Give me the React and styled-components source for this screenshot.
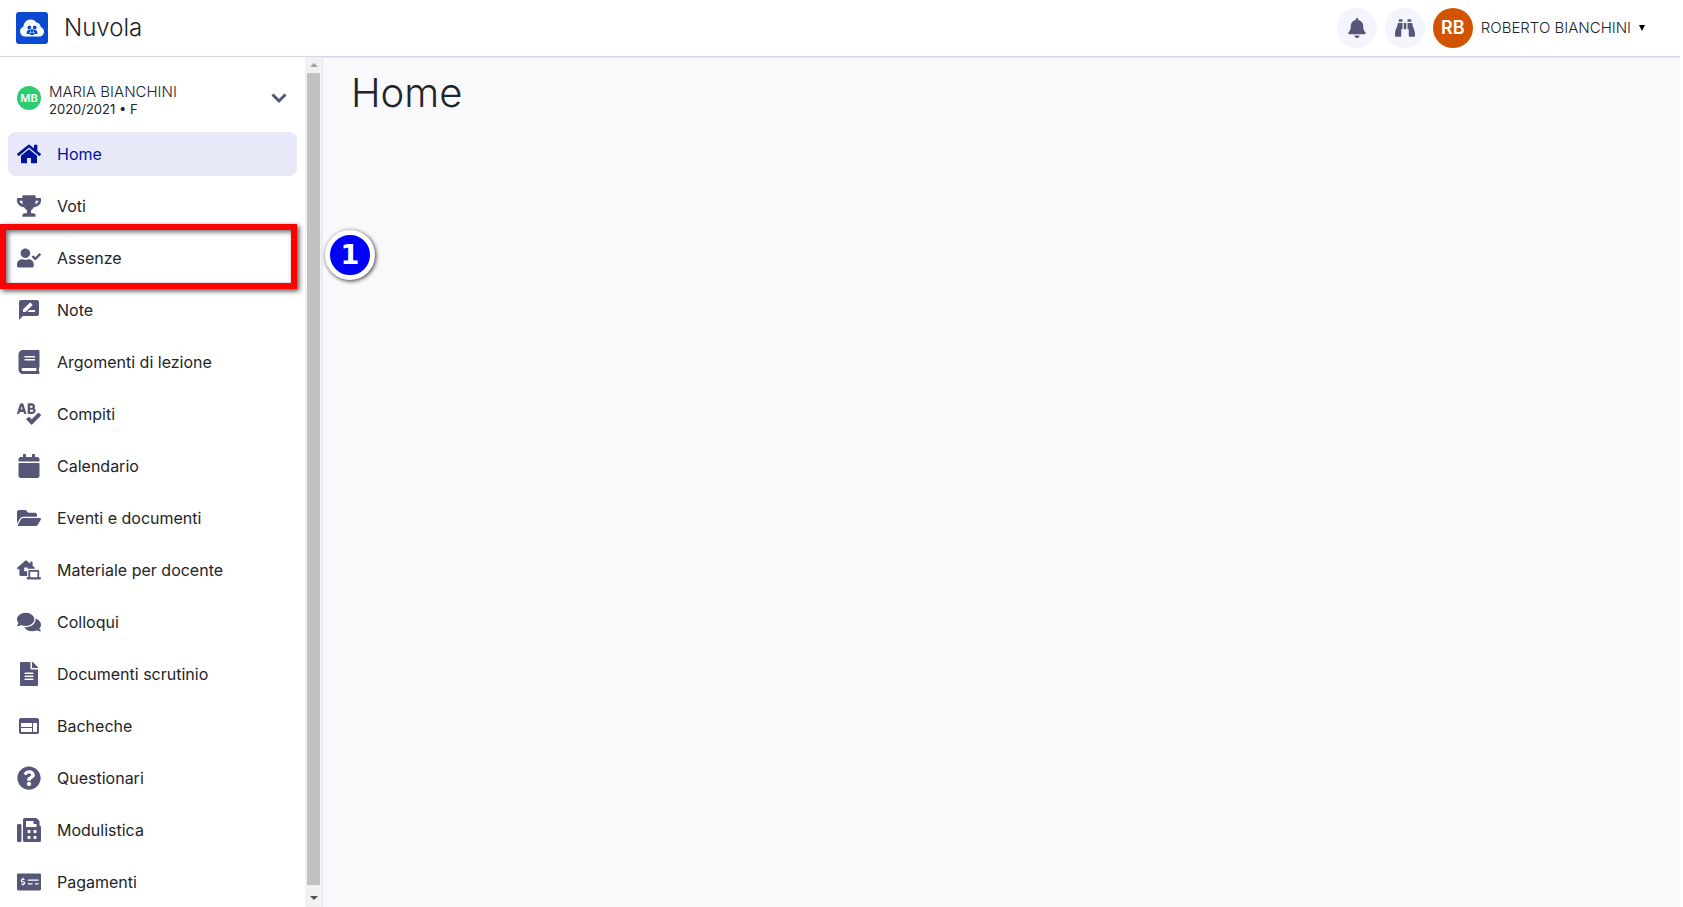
import React from 'react';
import styled, { createGlobalStyle } from 'styled-components';
import {
  FaHome,
  FaTrophy,
  FaUserCheck,
  FaBook,
  FaSpellCheck,
  FaCalendar,
  FaFolderOpen,
  FaLaptopHouse,
  FaComments,
  FaFileAlt,
  FaQuestionCircle,
  FaFax,
  FaMoneyCheckAlt,
  FaBell,
  FaBinoculars,
} from 'react-icons/fa';
import { MdRateReview, MdWeb } from 'react-icons/md';

const GlobalStyle = createGlobalStyle`
  * {
    box-sizing: border-box;
  }

  body {
    margin: 0;
    background: #f9f9fc;
    color: #212529;
    font-family: Inter, sans-serif;
    font-size: 16px;
    line-height: 24px;
  }

  button {
    font: inherit;
    color: inherit;
    border: none;
    padding: 0;
    cursor: pointer;
  }
`;

const Page = styled.div`
  height: 100vh;
  display: flex;
  flex-direction: column;
  overflow: hidden;
  border-right: 3px solid #fff;
`;

const Header = styled.header`
  flex: none;
  height: 57px;
  padding: 0 35px 0 16px;
  display: flex;
  justify-content: space-between;
  align-items: center;
  background: #fff;
  border-bottom: 1px solid #d6d6ec;
  box-shadow: 0 1px 1px #e8e8f5;
`;

const Brand = styled.a`
  display: flex;
  align-items: center;
  gap: 16px;
  color: #212529;
  font-size: 24px;
  font-weight: 300;
  text-decoration: none;
`;

const Actions = styled.div`
  display: flex;
  align-items: center;
  gap: 8px;
`;

const RoundButton = styled.button`
  width: 40px;
  height: 40px;
  display: flex;
  justify-content: center;
  align-items: center;
  border-radius: 50%;
  background: #f4f4fd;
  color: #565678;
`;

const UserButton = styled.button`
  display: flex;
  align-items: center;
  gap: 8px;
  background: none;
  font-size: 15px;
  font-weight: 300;
`;

const Avatar = styled.span`
  width: ${(props) => (props.$large ? '40px' : '24px')};
  height: ${(props) => (props.$large ? '40px' : '24px')};
  flex: none;
  display: flex;
  justify-content: center;
  align-items: center;
  border-radius: 50%;
  background: ${(props) => props.$color};
  color: #fff;
  font-size: ${(props) => (props.$large ? '18px' : '11px')};
  font-weight: 600;
`;

const Body = styled.div`
  flex: 1;
  min-height: 0;
  display: flex;
`;

const Sidebar = styled.aside`
  flex: none;
  width: 323px;
  display: flex;
  background: #fff;
  border-right: 1px solid #e6e6f5;
`;

const SidebarContent = styled.div`
  flex: 1;
  padding: 19px 8px 0;
`;

const StudentButton = styled.button`
  width: 100%;
  height: 44px;
  margin-bottom: 12px;
  padding: 0 10px 0 9px;
  display: flex;
  align-items: center;
  gap: 8px;
  background: none;
  text-align: left;
`;

const Student = styled.span`
  flex: 1;
  padding-top: 4px;
  display: flex;
  flex-direction: column;
  font-size: 15px;
  font-weight: 300;
  line-height: 18px;
`;

const StudentClass = styled.span`
  font-size: 13px;
  font-weight: 400;
  line-height: 16px;
`;

const Menu = styled.ul`
  margin: 0;
  padding: 0;
  display: flex;
  flex-direction: column;
  gap: 8px;
  list-style: none;
`;

const MenuItem = styled.li`
  position: relative;
`;

const MenuLink = styled.a`
  height: 44px;
  padding: 0 9px;
  display: flex;
  align-items: center;
  gap: 16px;
  border-radius: 8px;
  background: ${(props) => (props.$active ? '#e7e8f8' : 'transparent')};
  color: ${(props) => (props.$active ? '#00149b' : '#212529')};
  text-decoration: none;

  svg {
    flex: none;
    color: ${(props) => (props.$active ? '#00149b' : '#565678')};
  }
`;

const Highlight = styled.div`
  position: absolute;
  top: -12px;
  right: 0;
  bottom: -9px;
  left: -8px;
  border: 6px solid #f00;
  box-shadow: 2px 2px 5px rgba(0, 0, 0, 0.7), inset 2px 2px 5px rgba(0, 0, 0, 0.6);
  pointer-events: none;
`;

const Step = styled.div`
  position: absolute;
  top: -6px;
  left: 317px;
  z-index: 1;
  width: 50px;
  height: 50px;
  display: flex;
  justify-content: center;
  align-items: center;
  border: 5px solid #fff;
  border-radius: 50%;
  background: #00f;
  box-shadow: 1px 1px 4px rgba(0, 0, 0, 0.8);
  color: #fff;
  font-family: "DejaVu Sans", sans-serif;
  font-size: 27px;
  font-weight: 700;
`;

const ScrollTrack = styled.div`
  flex: none;
  width: 17px;
  display: flex;
  flex-direction: column;
  align-items: center;
  background: #f1f1f1;
`;

const ScrollArrow = styled.span`
  height: ${(props) => (props.$down ? '22px' : '16px')};
  padding-top: ${(props) => (props.$down ? '4px' : '0')};
  display: flex;
  align-items: center;

  &::before {
    content: '';
    border: 4px solid transparent;
    border-top: ${(props) => (props.$down ? '4px solid #505050' : 'none')};
    border-bottom: ${(props) => (props.$down ? 'none' : '4px solid #a3a3a3')};
  }
`;

const ScrollThumb = styled.div`
  flex: 1;
  width: 13px;
  background: #c1c1c1;
`;

const Content = styled.main`
  flex: 1;
  padding: 12px 28px;
`;

const Title = styled.h1`
  margin: 0;
  font-size: 40px;
  font-weight: 300;
  line-height: 48px;
`;

const menu = [
  { label: 'Home', icon: FaHome, active: true },
  { label: 'Voti', icon: FaTrophy },
  { label: 'Assenze', icon: FaUserCheck, step: 1 },
  { label: 'Note', icon: MdRateReview },
  { label: 'Argomenti di lezione', icon: FaBook },
  { label: 'Compiti', icon: FaSpellCheck },
  { label: 'Calendario', icon: FaCalendar },
  { label: 'Eventi e documenti', icon: FaFolderOpen },
  { label: 'Materiale per docente', icon: FaLaptopHouse },
  { label: 'Colloqui', icon: FaComments },
  { label: 'Documenti scrutinio', icon: FaFileAlt },
  { label: 'Bacheche', icon: MdWeb },
  { label: 'Questionari', icon: FaQuestionCircle },
  { label: 'Modulistica', icon: FaFax },
  { label: 'Pagamenti', icon: FaMoneyCheckAlt },
];

function Logo() {
  return (
    <svg width="32" height="32" viewBox="0 0 32 32">
      <rect width="32" height="32" rx="3" fill="#0a4ad0" />
      <path
        d="M9 24.500a5 5 0 0 1-1.600-9.700C7.600 10.800 10.600 7.500 14.500 7.500c2.500 0 4.700 1.200 6 3.100 2.400.2 4.100 2 4.200 4.500 2 .6 3.300 2.400 3.300 4.600 0 2.800-2.200 4.800-4.900 4.800z"
        fill="#fff"
      />
      <g fill="#0a4ad0">
        <circle cx="13.300" cy="15.500" r="1.900" />
        <circle cx="18.700" cy="15.500" r="1.900" />
        <path d="M10.500 22c0-2.600.8-4.200 2.800-4.200 1 0 1.500.5 1.700 1.200-1.100.7-1.400 1.700-1.400 3z" />
        <path d="M21.500 22c0-2.600-.8-4.200-2.800-4.200-1 0-1.500.5-1.700 1.200 1.100.7 1.400 1.700 1.400 3z" />
        <circle cx="16" cy="18.500" r="1.500" />
        <path d="M13.800 23c0-1.700.8-2.700 2.200-2.700s2.200 1 2.200 2.700z" />
      </g>
    </svg>
  );
}

export default function App() {
  return (
    <Page>
      <GlobalStyle />
      <Header>
        <Brand href="#">
          <Logo />
          Nuvola
        </Brand>
        <Actions>
          <RoundButton aria-label="Notifiche">
            <FaBell size={20} />
          </RoundButton>
          <RoundButton aria-label="Cerca">
            <FaBinoculars size={20} />
          </RoundButton>
          <UserButton>
            <Avatar $large $color="#d35400">RB</Avatar>
            ROBERTO BIANCHINI
            <svg width="6" height="6" viewBox="0 0 6 6">
              <path d="M0 0h6L3 6z" fill="#000" />
            </svg>
          </UserButton>
        </Actions>
      </Header>

      <Body>
        <Sidebar>
          <SidebarContent>
            <StudentButton>
              <Avatar $color="#2ecc71">MB</Avatar>
              <Student>
                MARIA BIANCHINI
                <StudentClass>2020/2021 • F</StudentClass>
              </Student>
              <svg width="16" height="12" viewBox="0 0 16 12">
                <path d="M1.500 2.500l6.500 6.500 6.500-6.500" fill="none" stroke="#565678" strokeWidth="3" />
              </svg>
            </StudentButton>
            <Menu>
              {menu.map(({ label, icon: Icon, active, step }) => (
                <MenuItem key={label}>
                  <MenuLink href="#" $active={active}>
                    <Icon size={24} />
                    {label}
                  </MenuLink>
                  {step && <Highlight />}
                  {step && <Step>{step}</Step>}
                </MenuItem>
              ))}
            </Menu>
          </SidebarContent>
          <ScrollTrack>
            <ScrollArrow />
            <ScrollThumb />
            <ScrollArrow $down />
          </ScrollTrack>
        </Sidebar>
        <Content>
          <Title>Home</Title>
        </Content>
      </Body>
    </Page>
  );
}
